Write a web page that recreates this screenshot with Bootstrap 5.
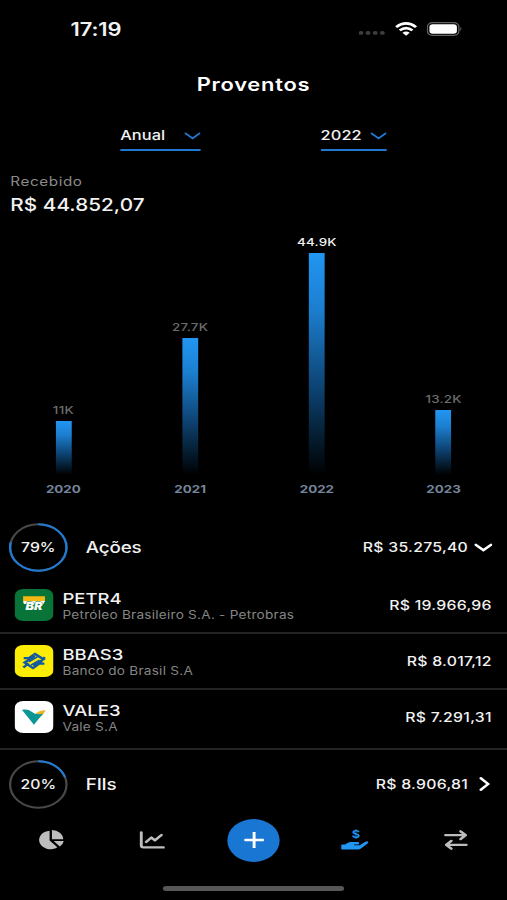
<!DOCTYPE html>
<html lang="pt-BR" data-bs-theme="dark">
<head>
<meta charset="utf-8">
<meta name="viewport" content="width=device-width, initial-scale=1">
<title>Proventos</title>
<link href="https://cdn.jsdelivr.net/npm/bootstrap@5.3.0/dist/css/bootstrap.min.css" rel="stylesheet">
<style>
  body { background: #000; margin: 0; overflow: hidden; }
  .phone { width: 417px; height: 900px; transform: scaleX(1.21583); transform-origin: 0 0; background: #000; color: #f2f2f2; font-family: Inter, "Liberation Sans", sans-serif; font-weight: 500; line-height: 1; white-space: nowrap; overflow: hidden; }
  svg { display: block; flex: none; }
  .status { height: 58px; padding: 0 36px 0 58px; }
  .clock { font-size: 18px; font-weight: 600; letter-spacing: -.1px; padding-top: 1px; }
  .heading { height: 54px; font-size: 18px; font-weight: 600; letter-spacing: .6px; margin: 0; }
  .filters { height: 39px; padding-top: 11px; }
  .picker { height: 28px; border-bottom: 2px solid #1f78d1; font-size: 13.5px; letter-spacing: .05px; padding-bottom: 1px; }
  .picker-period { width: 66px; }
  .picker-year { width: 54.5px; }
  .total { height: 71px; padding: 25px 8.5px 0; }
  .total-label { font-size: 12.5px; font-weight: 400; color: #8a8a8a; letter-spacing: .5px; }
  .total-value { font-size: 17px; margin-top: 8px; letter-spacing: .05px; }
  .chart { height: 289px; padding-bottom: 16px; margin-bottom: 5px; }
  .bar-value { font-size: 11px; color: #6c6c6c; letter-spacing: .2px; margin-bottom: 5px; }
  .bar-value.current { color: #f2f2f2; }
  .bar-fill { width: 13px; background: linear-gradient(#2196f3, #1c7fd0 25%, #0d4474 60%, #000); }
  .bar-year { font-size: 11px; font-weight: 700; color: #76859b; letter-spacing: 0; margin-top: 9px; }
  .group-row { height: 62px; padding: 0 12px 0 7px; }
  .group-next { margin-top: 3px; }
  .ring { width: 49px; height: 49px; }
  .ring-text { font-size: 13px; }
  .group-name { font-size: 15.5px; margin-left: 14.5px; letter-spacing: -.15px; padding-top: 1px; }
  .amount { font-size: 13px; letter-spacing: .22px; }
  .asset { height: 56px; padding: 0 12.5px 0 12px; border-bottom: 2px solid #242424; }
  .asset-last { height: 60px; padding-bottom: 4px; }
  .asset-name { margin-left: 7.4px; padding-top: 2px; }
  .ticker { font-size: 15.2px; letter-spacing: 0; }
  .company { font-size: 11.2px; font-weight: 400; color: #858585; letter-spacing: .2px; margin-top: 4px; }
  .tabs { height: 50px; }
  .add { width: 43px; height: 43px; background: #1976d2; }
  .home { width: 149px; height: 5px; background: #575757; margin: 21px auto 0; }
</style>
<script src="https://cdn.jsdelivr.net/npm/bootstrap@5.3.0/dist/js/bootstrap.bundle.min.js"></script>
</head>
<body>
<main class="phone d-flex flex-column">
  <div class="status d-flex align-items-center justify-content-between">
    <span class="clock">17:19</span>
    <div class="d-flex align-items-center">
      <svg width="22" height="12" viewBox="0 0 22 12" fill="#3d3d3d"><rect y="8" width="3.8" height="3.8" rx="1.5"/><rect x="5.8" y="8" width="3.8" height="3.8" rx="1.5"/><rect x="11.7" y="8" width="3.8" height="3.8" rx="1.5"/><rect x="17.6" y="8" width="3.8" height="3.8" rx="1.5"/></svg>
      <svg class="ms-2" width="18" height="14" viewBox="0 0 18 14" fill="none" stroke="#fff" stroke-width="2.5"><path d="M.8 5.1Q9-2.4 17.2 5.1M3.8 8.4Q9 3.8 14.2 8.4"/><path d="M6 10.7Q9 8.3 12 10.7L9 13.7Z" fill="#fff" stroke="none"/></svg>
      <svg class="ms-2" width="30" height="14" viewBox="0 0 30 14"><rect x=".6" y=".6" width="25.8" height="12.8" rx="4" fill="none" stroke="#626262" stroke-width="1.1"/><rect x="2.2" y="2.2" width="22.6" height="9.6" rx="2.7" fill="#fff"/><path d="M27.7 4.8q1.6 2.2 0 4.4z" fill="#6a6a6a"/></svg>
    </div>
  </div>
  <h1 class="heading d-flex align-items-center justify-content-center">Proventos</h1>

  <div class="filters d-flex justify-content-evenly">
    <div class="picker picker-period d-flex align-items-center justify-content-between">Anual
      <svg width="14" height="8" viewBox="0 0 14 8" fill="none" stroke="#1f78d1" stroke-width="1.7" stroke-linecap="round"><path d="M1.6 1.3 7.4 6.4 13.1 1.3"/></svg></div>
    <div class="picker picker-year d-flex align-items-center justify-content-between">2022
      <svg width="14" height="8" viewBox="0 0 14 8" fill="none" stroke="#1f78d1" stroke-width="1.7" stroke-linecap="round"><path d="M1.6 1.3 7.4 6.4 13.1 1.3"/></svg></div>
  </div>

  <section class="total">
    <div class="total-label">Recebido</div>
    <div class="total-value">R$ 44.852,07</div>
  </section>

  <section class="chart row g-0 align-items-end text-center">
    <div class="col d-flex flex-column align-items-center"><span class="bar-value">11K</span><span class="bar-fill" style="height:54px"></span><span class="bar-year">2020</span></div>
    <div class="col d-flex flex-column align-items-center"><span class="bar-value">27.7K</span><span class="bar-fill" style="height:137px"></span><span class="bar-year">2021</span></div>
    <div class="col d-flex flex-column align-items-center"><span class="bar-value current">44.9K</span><span class="bar-fill" style="height:222px"></span><span class="bar-year">2022</span></div>
    <div class="col d-flex flex-column align-items-center"><span class="bar-value">13.2K</span><span class="bar-fill" style="height:65px"></span><span class="bar-year">2023</span></div>
  </section>

  <section>
    <div class="group-row d-flex align-items-center">
      <div class="ring position-relative d-flex align-items-center justify-content-center">
        <svg class="position-absolute top-0 start-0" width="49" height="49" viewBox="0 0 49 49" fill="none" stroke-width="1.9"><circle cx="24.5" cy="24.5" r="23.2" stroke="#484848"/><circle cx="24.5" cy="24.5" r="23.2" stroke="#1f7ad4" pathLength="100" stroke-dasharray="79 100" transform="rotate(-90 24.5 24.5)"/></svg>
        <span class="ring-text">79%</span>
      </div>
      <span class="group-name">Ações</span>
      <span class="amount ms-auto">R$ 35.275,40</span>
      <svg class="ms-1" width="16" height="10" viewBox="0 0 16 10" fill="none" stroke="#fff" stroke-width="2.3" stroke-linecap="round"><path d="M2.4 2.8 8.6 8.2 14.8 2.8"/></svg>
    </div>

    <div class="asset d-flex align-items-center">
      <svg width="32" height="32" viewBox="0 0 32 32"><rect width="32" height="32" rx="7" fill="#087437"/><path d="M7 7.3H25V12H7Z" fill="#f5b711"/><path d="M7 12H25L23.6 15H7.6Z" fill="#fff"/><text x="15.9" y="20.6" text-anchor="middle" font-family="Inter, sans-serif" font-size="10.5" font-weight="900" font-style="italic" fill="#fff" stroke="#087437" stroke-width=".8" paint-order="stroke">BR</text></svg>
      <div class="asset-name"><div class="ticker">PETR4</div><div class="company">Petróleo Brasileiro S.A. - Petrobras</div></div>
      <span class="amount ms-auto">R$ 19.966,96</span>
    </div>
    <div class="asset d-flex align-items-center">
      <svg width="32" height="32" viewBox="0 0 32 32"><rect width="32" height="32" rx="7" fill="#fdec03"/><g fill="none" stroke="#125aa0" stroke-width="2.2"><path d="M7.5 13.1h4.3l5-4.1 7 5.3-8.5 6.4M24.8 12.1l-4.3 6.1M24.5 18.6h-4.3l-5 4.4-7-5.4 8.5-6.5M7.2 22.5l4.3-4.3"/><path d="m11.7 16.9 7-5.1M13.5 20.1l7-5.1" stroke-width="1.5"/></g></svg>
      <div class="asset-name"><div class="ticker">BBAS3</div><div class="company">Banco do Brasil S.A</div></div>
      <span class="amount ms-auto">R$ 8.017,12</span>
    </div>
    <div class="asset asset-last d-flex align-items-center">
      <svg width="32" height="32" viewBox="0 0 32 32"><rect width="32" height="32" rx="7" fill="#fff"/><path d="M16.2 14.2Q19 9.2 25.8 9.2L22.7 14.5Z" fill="#edb52b"/><path d="M6 8.8Q11 7.4 14 10.7 18 14.8 23.5 12.5L15.9 23.8Z" fill="#0c9794"/></svg>
      <div class="asset-name"><div class="ticker">VALE3</div><div class="company">Vale S.A</div></div>
      <span class="amount ms-auto">R$ 7.291,31</span>
    </div>

    <div class="group-row group-next d-flex align-items-center">
      <div class="ring position-relative d-flex align-items-center justify-content-center">
        <svg class="position-absolute top-0 start-0" width="49" height="49" viewBox="0 0 49 49" fill="none" stroke-width="1.9"><circle cx="24.5" cy="24.5" r="23.2" stroke="#484848"/><circle cx="24.5" cy="24.5" r="23.2" stroke="#1f7ad4" pathLength="100" stroke-dasharray="20 100" transform="rotate(-90 24.5 24.5)"/></svg>
        <span class="ring-text">20%</span>
      </div>
      <span class="group-name">FIIs</span>
      <span class="amount ms-auto">R$ 8.906,81</span>
      <svg class="ms-1" width="16" height="16" viewBox="0 0 16 16" fill="none" stroke="#fff" stroke-width="2.3" stroke-linecap="round"><path d="M6.4 2.2 12.4 8 6.4 13.8"/></svg>
    </div>
  </section>

  <nav class="tabs row g-0 align-items-center">
    <div class="col d-flex justify-content-center"><svg width="22" height="22" viewBox="0 0 22 22" fill="#bdbdbd"><path d="M9.8 1.7V11.5L16.2 18.3A9.3 9.3 0 1 1 9.8 1.7Z"/><path d="M11.7 1A9.3 9.3 0 0 1 21 10.2H11.7Z"/><path d="M13.1 12H21.4Q21 15.3 18.2 17.5Z"/></svg></div>
    <div class="col d-flex justify-content-center"><svg width="22" height="20" viewBox="0 0 22 20" fill="none" stroke="#bdbdbd" stroke-width="2.4" stroke-linecap="round" stroke-linejoin="round"><path d="M2.2 2.4V15.6Q2.2 17.4 4 17.4H20.4"/><path d="M6.2 12 10.5 7.5 13.4 10.3 18.8 5"/></svg></div>
    <div class="col d-flex justify-content-center"><div class="add rounded-circle d-flex align-items-center justify-content-center"><svg width="18" height="18" viewBox="0 0 18 18" stroke="#fff" stroke-width="2.4"><path d="M9 1V17M1 9H17"/></svg></div></div>
    <div class="col d-flex justify-content-center"><svg width="24" height="22" viewBox="0 0 24 22" fill="#2196f3"><text x="12.8" y="9.2" text-anchor="middle" font-family="Inter, sans-serif" font-size="10.5" font-weight="700">$</text><path d="M1.2 15.5H3.9L6.1 13.7Q7.2 12.9 8.6 12.9H14.4Q15.8 13.1 15.4 14.5 15.2 15.4 14.1 15.5H11.2V16.2H15.8L20.5 12.7Q22.2 11.9 22.9 13 23.2 13.8 22.1 14.7L17.4 18.9Q16 20.4 14.1 20.4H1.2Q.7 20.4.7 19.8V16Q.7 15.5 1.2 15.5Z"/></svg></div>
    <div class="col d-flex justify-content-center"><svg width="20" height="22" viewBox="0 0 20 22" fill="none" stroke="#bdbdbd" stroke-width="2.3" stroke-linecap="round" stroke-linejoin="round"><path d="M1.4 6.2H17.6M13.8 2.3 18 6.2 13.8 10.1M18.6 15.8H2.4M6.2 11.9 2 15.8 6.2 19.7"/></svg></div>
  </nav>
  <div class="home rounded-pill"></div>
</main>
</body>
</html>
